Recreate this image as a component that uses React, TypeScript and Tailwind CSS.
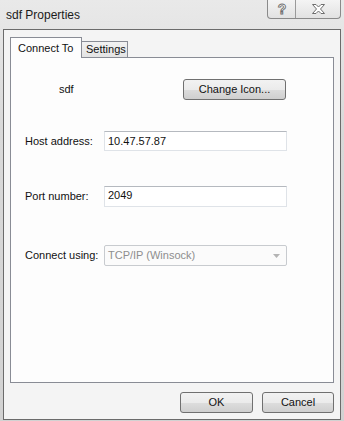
import React from "react";

const font = "font-['Liberation_Sans',Arial,sans-serif]";

function WinButton({ label, className = "" }: { label: string; className?: string }) {
  return (
    <div
      className={`h-[21px] flex items-center justify-center rounded-[3px] border border-[#707070] bg-[linear-gradient(#f2f2f2_0%,#ebebeb_50%,#dddddd_51%,#cfcfcf_100%)] text-[11px] text-[#111] ${className}`}
    >
      {label}
    </div>
  );
}

function Field({ label, children, className = "" }: { label: string; children: React.ReactNode; className?: string }) {
  return (
    <div className={`flex items-center ${className}`}>
      <div className="w-[93px] shrink-0 pl-[14px] text-[11px] text-[#111] whitespace-nowrap">{label}</div>
      {children}
    </div>
  );
}

export default function App() {
  return (
    <div className={`w-[344px] h-[421px] flex flex-col px-[3px] pb-[1px] bg-[linear-gradient(180deg,#e9e9e9,#d9d9d9_30%,#d2d2d2)] ${font}`}>
      {/* title bar */}
      <div className="relative h-[29px] shrink-0">
        <div className="pl-[3px] pt-[6px] text-[12px] text-[#1b1b1b]">sdf Properties</div>
        <div className="absolute right-0 top-0 flex h-[19px] w-[74px] rounded-b-[4px] border border-t-0 border-[#8a8a8a] bg-[linear-gradient(#f4f4f4,#e2e2e2)]">
          <div className="w-[28px] flex items-center justify-center border-r border-[#9a9a9a]">
            <svg width="10" height="14" viewBox="0 0 10 14">
              <text x="5" y="12" textAnchor="middle" fontSize="14" fontFamily="Liberation Sans, Arial, sans-serif" fontWeight="bold" fill="#ffffff" stroke="#6e6e6e" strokeWidth="0.9">?</text>
            </svg>
          </div>
          <div className="flex-1 flex items-center justify-center">
            <svg width="15" height="12" viewBox="0 0 15 12">
              <path
                d="M1.5 1.5 H5 L7.5 4 L10 1.5 H13.5 L9.5 6 L13.5 10.5 H10 L7.5 8 L5 10.5 H1.5 L5.5 6 Z"
                fill="#ffffff"
                stroke="#6e6e6e"
                strokeWidth="1"
                strokeLinejoin="round"
              />
            </svg>
          </div>
        </div>
      </div>

      {/* client area */}
      <div className="flex-1 flex flex-col border border-[#6b6b6b] bg-[#f4f4f4] px-[6px] pt-[7px]">
        {/* tabs */}
        <div className="flex items-end h-[20px]">
          <div className="relative z-10 h-[21px] -mb-[1px] w-[72px] border border-b-0 border-[#898c95] bg-[#fdfdfd] pl-[7px] pt-[2px] text-[11px] text-[#111]">
            Connect To
          </div>
          <div className="h-[16px] w-[47px] -ml-[1px] border border-b-0 border-[#898c95] bg-[linear-gradient(#f2f2f2,#e3e3e3)] pl-[4px] text-[11px] leading-[15px] text-[#111]">
            Settings
          </div>
        </div>

        {/* panel */}
        <div className="h-[326px] w-[324px] border border-[#898c95] bg-[#fdfdfd] pt-[21px]">
          <div className="flex items-center h-[21px]">
            <div className="ml-[48px] w-[124px] text-[11px] text-[#111]">sdf</div>
            <WinButton label="Change Icon..." className="w-[103px]" />
          </div>

          <Field label="Host address:" className="mt-[31px]">
            <div className="h-[20px] w-[183px] border border-[#dfe3e8] border-t-[#b5b9bf] bg-white pl-[3px] flex items-center text-[11px] text-[#111]">
              10.47.57.87
            </div>
          </Field>

          <Field label="Port number:" className="mt-[35px]">
            <div className="h-[21px] w-[183px] border border-[#dfe3e8] border-t-[#b5b9bf] bg-white pl-[3px] pb-[3px] flex items-center text-[11px] text-[#111]">
              2049
            </div>
          </Field>

          <Field label="Connect using:" className="mt-[38px]">
            <div className="h-[21px] w-[183px] rounded-[2px] border border-[#c8cbcf] bg-[#fbfbfb] pl-[3px] pr-[6px] flex items-center justify-between text-[11px] text-[#8e8e8e]">
              <span>TCP/IP (Winsock)</span>
              <svg width="7" height="4" viewBox="0 0 7 4">
                <path d="M0 0 H7 L3.5 4 Z" fill="#b4b4b4" />
              </svg>
            </div>
          </Field>
        </div>

        {/* bottom buttons */}
        <div className="mt-[9px] flex justify-end gap-[9px]">
          <WinButton label="OK" className="w-[73px]" />
          <WinButton label="Cancel" className="w-[72px]" />
        </div>
      </div>
    </div>
  );
}
